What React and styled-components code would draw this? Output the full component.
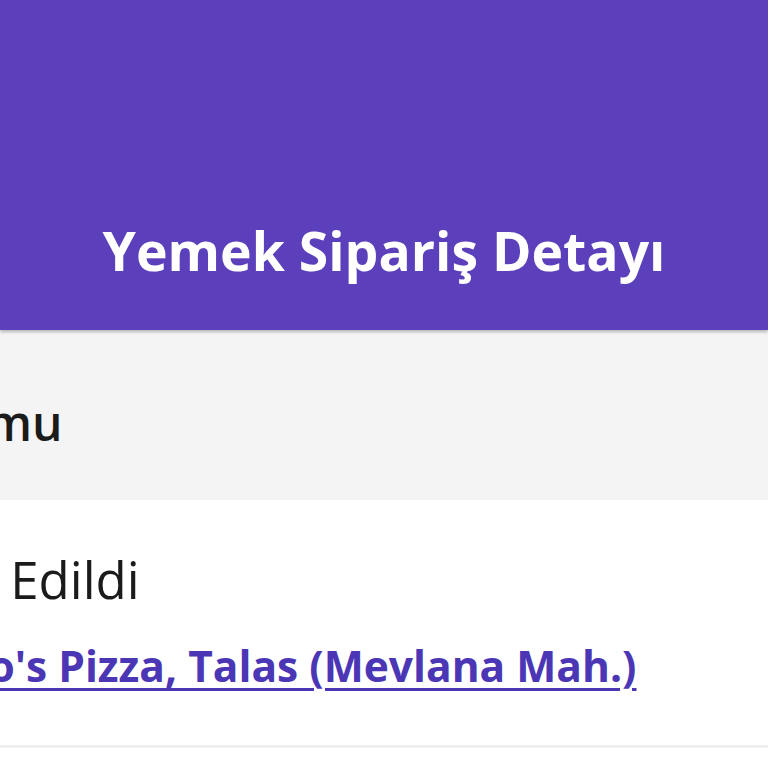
import styled, { createGlobalStyle } from "styled-components";

const GlobalStyle = createGlobalStyle`
  html, body {
    margin: 0;
    padding: 0;
    background: #ffffff;
    overflow: hidden;
  }
  body {
    font-family: "Open Sans", "Noto Sans", sans-serif;
    color: #1b1b1b;
  }
`;

const Page = styled.div`
  width: 768px;
  height: 768px;
  overflow: hidden;
  display: flex;
  flex-direction: column;
`;

const Header = styled.header`
  height: 330px;
  background: #5b3fbb;
  box-shadow: 0 2px 3px rgba(0, 0, 0, 0.25);
  display: flex;
  align-items: flex-end;
  justify-content: center;
  padding-bottom: 53px;
  box-sizing: border-box;
  position: relative;
  z-index: 1;
`;

const Title = styled.h1`
  margin: 0;
  color: #ffffff;
  font-size: 53.5px;
  font-weight: 700;
  line-height: 1;
  white-space: nowrap;
`;

const SectionHead = styled.div`
  height: 170px;
  background: #f4f4f4;
  display: flex;
  align-items: center;
  padding-top: 15px;
  box-sizing: border-box;
`;

const SectionTitle = styled.h2`
  margin: 0 0 0 -298px;
  font-size: 48px;
  font-weight: 600;
  line-height: 1;
  white-space: nowrap;
  color: #1b1b1b;
`;

const SectionBody = styled.div`
  height: 248px;
  border-bottom: 3px solid #f0f0f0;
  box-sizing: border-box;
  display: flex;
  flex-direction: column;
  padding-top: 54px;
  gap: 40px;
`;

const Status = styled.p`
  margin: 0 0 0 -157px;
  font-size: 51px;
  font-weight: 400;
  line-height: 1;
  white-space: nowrap;
`;

const StoreLink = styled.a`
  margin-left: -152px;
  font-size: 42.5px;
  font-weight: 700;
  line-height: 1;
  white-space: nowrap;
  color: #4b36b5;
  text-decoration: underline;
  text-decoration-thickness: 3px;
  text-underline-offset: 6px;
  align-self: flex-start;
`;

export default function App() {
  return (
    <>
      <GlobalStyle />
      <Page>
        <Header>
          <Title>Yemek Sipariş Detayı</Title>
        </Header>
        <SectionHead>
          <SectionTitle>Sipariş Durumu</SectionTitle>
        </SectionHead>
        <SectionBody>
          <Status>Teslim Edildi</Status>
          <StoreLink href="#">Domino's Pizza, Talas (Mevlana Mah.)</StoreLink>
        </SectionBody>
      </Page>
    </>
  );
}
